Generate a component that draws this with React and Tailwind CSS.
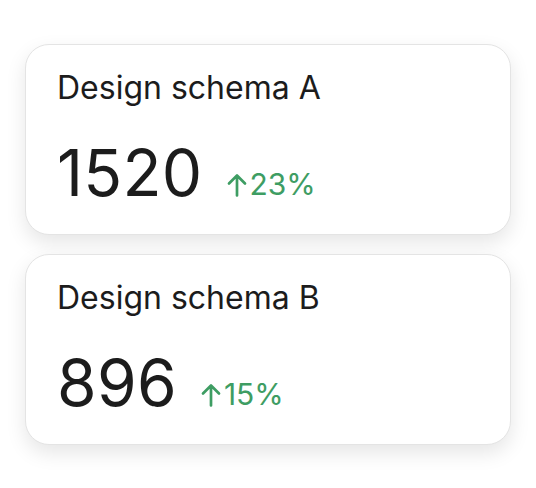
import React from "react";

function Card({ title, value, delta }) {
  return (
    <div className="rounded-[24px] border border-[#e4e4e4] bg-white px-[31px] pt-[23px] pb-[29px] shadow-[0_8px_20px_rgba(0,0,0,0.10)]">
      <div className="text-[32px] leading-[40px] text-[#1c1c1c]">{title}</div>
      <div className="mt-[33px] flex items-baseline gap-[24px] h-[64px]">
        <span className="text-[64px] leading-[64px] text-[#1c1c1c] tracking-[0.3px]">{value}</span>
        <span className="flex items-center text-[30px] leading-[36px] text-[#3e9d63]">
          <svg viewBox="0 0 20 24" className="w-[20px] h-[24px] shrink-0 mr-[3px] translate-y-[1px]" fill="none" stroke="currentColor" strokeWidth="2.7" strokeLinecap="round" strokeLinejoin="round">
            <path d="M10 22.5V2.5M2 10.5l8-8 8 8" />
          </svg>
          <span>{delta}</span>
        </span>
      </div>
    </div>
  );
}

export default function App() {
  return (
    <div className="w-[536px] h-[488px] bg-white pt-[44px] px-[25px] flex flex-col gap-[19px]" style={{ fontFamily: "Inter, sans-serif" }}>
      <Card title="Design schema A" value="1520" delta="23%" />
      <Card title="Design schema B" value="896" delta="15%" />
    </div>
  );
}
